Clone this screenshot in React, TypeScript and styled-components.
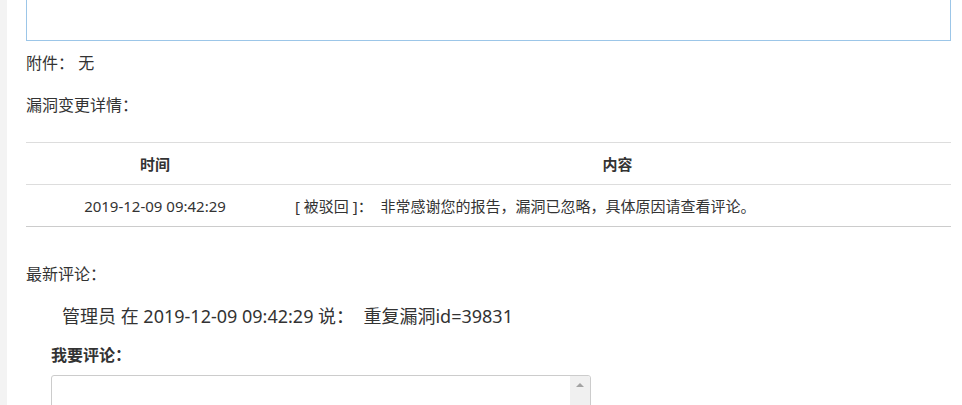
import styled, { createGlobalStyle } from 'styled-components'

const GlobalStyle = createGlobalStyle`
  html, body {
    margin: 0;
    padding: 0;
    background: #ffffff;
    overflow: hidden;
  }
  body {
    font-family: "Noto Sans", "Noto Sans CJK SC", sans-serif;
    color: #333333;
  }
`

type ChangeLog = {
  time: string
  status: string
  content: string
}

const changes: ChangeLog[] = [
  {
    time: '2019-12-09 09:42:29',
    status: '被驳回',
    content: '非常感谢您的报告，漏洞已忽略，具体原因请查看评论。',
  },
]

const Page = styled.div`
  display: flex;
  height: 405px;
  overflow: hidden;
`

const SideStrip = styled.div`
  width: 7px;
  flex-shrink: 0;
  background-color: #f3f3f3;
`

const Main = styled.div`
  flex: 1;
  padding: 0 11px 0 19px;
`

const DescBox = styled.div`
  height: 40px;
  margin-top: -1px;
  border: 1px solid #9cc6e8;
  background-color: #ffffff;
`

const Line = styled.div<{ $top: number }>`
  margin-top: ${({ $top }) => $top}px;
  font-size: 16px;
  line-height: 24px;
  white-space: pre;
`

const Table = styled.table`
  margin-top: 25px;
  width: 100%;
  border-collapse: collapse;
  font-size: 15px;
  color: #333333;
`

const HeadCell = styled.th<{ $width?: number }>`
  width: ${({ $width }) => ($width ? `${$width}px` : 'auto')};
  height: 41px;
  padding: 0;
  font-weight: 700;
  text-align: center;
  border-top: 1px solid #dddddd;
  border-bottom: 1px solid #dddddd;
`

const Cell = styled.td<{ $align?: 'left' | 'center' }>`
  height: 41px;
  padding: 0 0 0 ${({ $align }) => ($align === 'left' ? '11px' : '0')};
  text-align: ${({ $align }) => $align ?? 'center'};
  border-bottom: 1px solid #cccccc;
  white-space: pre;
`

const Comment = styled.div`
  margin-top: 17px;
  padding-left: 36px;
  font-size: 18px;
  line-height: 26px;
  white-space: pre;
`

const CommentForm = styled.div`
  margin-top: 14px;
  padding-left: 25px;
  display: flex;
  flex-direction: column;
  gap: 8px;
`

const FormLabel = styled.div`
  font-size: 16px;
  font-weight: 700;
  line-height: 24px;
`

const InputWrap = styled.div`
  position: relative;
  width: 540px;
  height: 80px;
  flex-shrink: 0;
`

const CommentInput = styled.textarea`
  display: block;
  width: 100%;
  height: 100%;
  box-sizing: border-box;
  border: 1px solid #cccccc;
  border-radius: 3px;
  resize: none;
  overflow: hidden;
  padding: 4px 24px 4px 6px;
  font-family: inherit;
  font-size: 14px;
  outline: none;
`

const ScrollTrack = styled.div`
  position: absolute;
  top: 1px;
  right: 1px;
  bottom: 1px;
  width: 20px;
  background-color: #f0f0f0;
  border-top-right-radius: 2px;
  display: flex;
  justify-content: center;
  pointer-events: none;
`

const ArrowUp = styled.span`
  margin-top: 7px;
  width: 0;
  height: 0;
  border-left: 4px solid transparent;
  border-right: 4px solid transparent;
  border-bottom: 4px solid #a3a3a3;
`

const App = () => {
  return (
    <>
      <GlobalStyle />
      <Page>
        <SideStrip />
        <Main>
          <DescBox />
          <Line $top={10}>附件： 无</Line>
          <Line $top={18}>漏洞变更详情：</Line>

          <Table>
            <thead>
              <tr>
                <HeadCell $width={258}>时间</HeadCell>
                <HeadCell>内容</HeadCell>
              </tr>
            </thead>
            <tbody>
              {changes.map((change) => (
                <tr key={change.time}>
                  <Cell>{change.time}</Cell>
                  <Cell $align="left">
                    [ {change.status} ]：  {change.content}
                  </Cell>
                </tr>
              ))}
            </tbody>
          </Table>

          <Line $top={35}>最新评论：</Line>
          <Comment>管理员 在 2019-12-09 09:42:29 说：  重复漏洞id=39831</Comment>

          <CommentForm>
            <FormLabel>我要评论：</FormLabel>
            <InputWrap>
              <CommentInput />
              <ScrollTrack>
                <ArrowUp />
              </ScrollTrack>
            </InputWrap>
          </CommentForm>
        </Main>
      </Page>
    </>
  )
}

export default App
